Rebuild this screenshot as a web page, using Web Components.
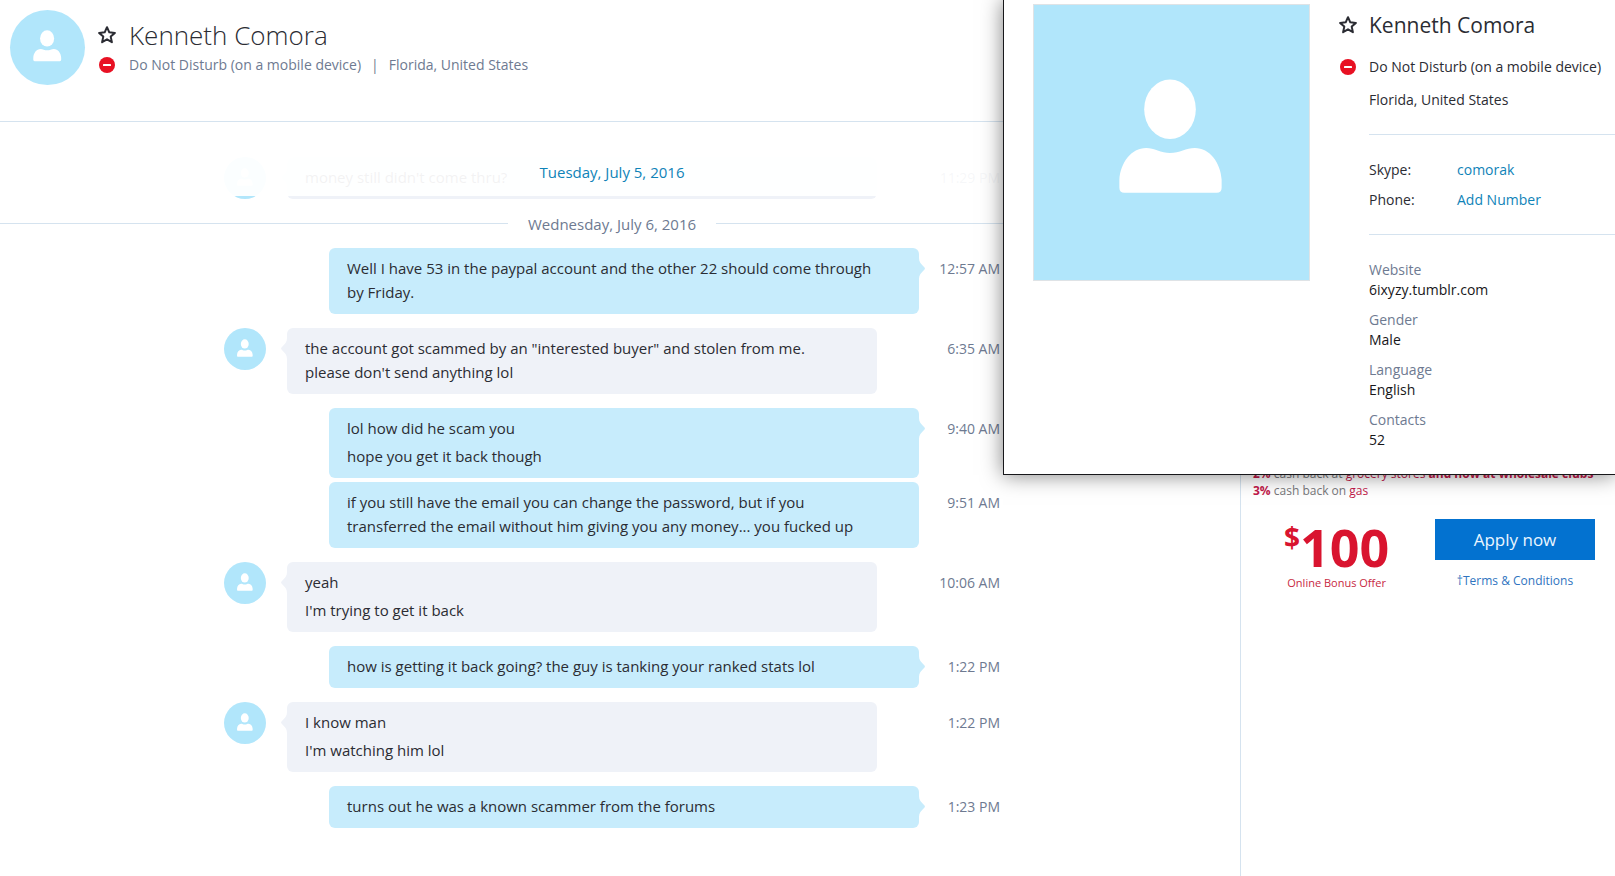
<!DOCTYPE html>
<html lang="en">
<head>
<meta charset="utf-8">
<title>Kenneth Comora</title>
<style>
  html, body { margin: 0; }
  body {
    font: 15px/24px "Open Sans", "Noto Sans", sans-serif;
    color: #2b2c33;
    background: #fff;
    --muted: #6e7a91;
    --link: #0f83b8;
    --rule: #d5e3ef;
    --avatar: #b1e6fb;
  }
</style>
</head>
<body>
<chat-app></chat-app>

<template id="t-app">
  <style>
    :host { display: grid; grid-template-columns: minmax(0, 1fr) 375px; min-height: 100vh; position: relative; overflow: hidden; box-sizing: border-box; }
    main { display: flex; flex-direction: column; min-width: 0; }
  </style>
  <main>
    <chat-header></chat-header>
    <chat-stream></chat-stream>
  </main>
  <side-offer></side-offer>
  <profile-card></profile-card>
</template>

<template id="t-avatar">
  <style>
    :host { display: block; flex: none; width: 42px; height: 42px; border-radius: 50%; background: var(--avatar); overflow: hidden; }
    svg { display: block; width: 100%; height: 100%; }
  </style>
  <svg viewBox="0 0 277 277" fill="#fff" aria-hidden="true">
    <ellipse cx="137" cy="105" rx="26" ry="30"/>
    <path d="M86 184V176C87 159 98 144 113 144C121 144 128 149 137 149C147 149 153 144 162 144C177 144 188 159 189 176V184Q189 189 184 189H91Q86 189 86 184Z"/>
  </svg>
</template>

<template id="t-star">
  <style>
    :host { display: block; flex: none; width: 20px; height: 20px; }
    button { display: block; width: 20px; height: 20px; padding: 0; border: 0; background: none; color: inherit; }
    svg { display: block; }
  </style>
  <button type="button" aria-label="Favourite">
    <svg width="20" height="20" viewBox="0 0 20 20" fill="none" stroke="currentColor" stroke-width="2" stroke-linejoin="round"><path d="M10 2.2L12.3 7.3L17.9 7.9L13.7 11.6L14.9 17.2L10 14.3L5.1 17.2L6.3 11.6L2.1 7.9L7.7 7.3Z"/></svg>
  </button>
</template>

<template id="t-dnd">
  <style>
    :host { display: flex; justify-content: center; flex: none; width: 20px; }
    svg { display: block; }
  </style>
  <svg width="16" height="16" viewBox="0 0 16 16" aria-hidden="true"><circle cx="8" cy="8" r="8" fill="#e81123"/><rect x="4" y="7" width="8" height="2" rx="0.6" fill="#fff"/></svg>
</template>

<template id="t-header">
  <style>
    :host { display: flex; gap: 12px; padding: 10px 10px 36px; border-bottom: 1px solid var(--rule); }
    user-avatar { width: 75px; height: 75px; }
    .who { display: grid; grid-template-columns: 20px 1fr; column-gap: 12px; align-content: start; align-items: center; padding-top: 7px; }
    h1 { margin: 0; font-size: 26px; line-height: 36px; font-weight: 300; }
    p { margin: 0; font-size: 14px; line-height: 24px; color: var(--muted); display: flex; gap: 10px; white-space: nowrap; }
  </style>
  <user-avatar></user-avatar>
  <div class="who">
    <star-button></star-button><h1>Kenneth Comora</h1>
    <dnd-icon></dnd-icon><p><span>Do Not Disturb (on a mobile device)</span><span>|</span><span>Florida, United States</span></p>
  </div>
</template>

<template id="t-stream">
  <style>
    :host { display: block; position: relative; padding: 35px 16px 48px 0; }
    .veil { position: absolute; top: 0; left: 0; right: 16px; height: 74px; box-sizing: border-box; padding-top: 38px; background: rgba(255, 255, 255, .94); color: var(--link); text-align: center; }
    .group { display: flex; flex-direction: column; gap: 4px; width: 100%; max-width: 776px; margin: 0 auto 14px; }
  </style>
  <div class="group">
    <chat-message time="11:29 PM"><p>money still didn't come thru?</p></chat-message>
  </div>
  <day-divider>Wednesday, July 6, 2016</day-divider>
  <div class="group">
    <chat-message own time="12:57 AM"><p>Well I have 53 in the paypal account and the other 22 should come through by Friday.</p></chat-message>
  </div>
  <div class="group">
    <chat-message time="6:35 AM"><p>the account got scammed by an "interested buyer" and stolen from me. please don't send anything lol</p></chat-message>
  </div>
  <div class="group">
    <chat-message own time="9:40 AM"><p>lol how did he scam you</p><p>hope you get it back though</p></chat-message>
    <chat-message own continued time="9:51 AM"><p>if you still have the email you can change the password, but if you transferred the email without him giving you any money... you fucked up</p></chat-message>
  </div>
  <div class="group">
    <chat-message time="10:06 AM"><p>yeah</p><p>I'm trying to get it back</p></chat-message>
  </div>
  <div class="group">
    <chat-message own time="1:22 PM"><p>how is getting it back going? the guy is tanking your ranked stats lol</p></chat-message>
  </div>
  <div class="group">
    <chat-message time="1:22 PM"><p>I know man</p><p>I'm watching him lol</p></chat-message>
  </div>
  <div class="group">
    <chat-message own time="1:23 PM"><p>turns out he was a known scammer from the forums</p></chat-message>
  </div>
  <div class="veil">Tuesday, July 5, 2016</div>
</template>

<template id="t-divider">
  <style>
    :host { display: flex; align-items: center; gap: 20px; height: 21px; margin-bottom: 14px; color: var(--muted); white-space: nowrap; }
    :host::before, :host::after { content: ""; flex: 1; height: 1px; background: var(--rule); }
  </style>
  <slot></slot>
</template>

<template id="t-message">
  <style>
    :host { display: flex; align-items: flex-start; --bubble: #eff2f8; }
    :host([own]) { --bubble: #c7ecfc; }
    .bubble { position: relative; flex: 0 1 590px; box-sizing: border-box; margin-left: 21px; padding: 8px 40px 10px 18px; border-radius: 6px; background: var(--bubble); display: flex; flex-direction: column; gap: 4px; }
    :host([own]) .bubble { margin-left: 105px; }
    :host([own]) user-avatar { display: none; }
    ::slotted(p) { margin: 0; }
    .tail { position: absolute; top: 10px; left: -6px; fill: var(--bubble); }
    :host([own]) .tail { left: auto; right: -6px; transform: scaleX(-1); }
    :host([continued]) .tail { display: none; }
    time { margin-left: auto; padding-top: 9px; font-size: 14px; color: var(--muted); white-space: nowrap; }
  </style>
  <user-avatar></user-avatar>
  <div class="bubble">
    <svg class="tail" width="7" height="21" viewBox="0 0 7 21" aria-hidden="true"><path d="M7 0H6C6 4 4 6 0.5 9.5Q-.3 10.5 .5 11.5C4 15 6 17 6 21H7Z"/></svg>
    <slot></slot>
  </div>
  <time></time>
</template>

<template id="t-offer">
  <style>
    :host { display: block; box-sizing: border-box; border-left: 1px solid var(--rule); padding: 465px 20px 24px 12px; font-size: 12px; line-height: 17px; color: #77777a; }
    p { margin: 0; white-space: nowrap; }
    b, i { color: #c2194a; font-style: normal; }
    .row { display: flex; justify-content: space-between; align-items: flex-start; padding: 20px 0 0 31px; }
    .bonus { display: flex; flex-direction: column; align-items: center; color: #c8283f; font-size: 11px; line-height: 15px; }
    .sum { display: flex; align-items: flex-start; color: #d9142f; font-weight: 700; font-size: 52px; line-height: 56px; }
    .sum span:first-child { font-size: 28px; line-height: 36px; }
    .cta { display: flex; flex-direction: column; align-items: center; gap: 12px; width: 160px; }
    button { width: 160px; height: 41px; padding: 0; border: 0; background: #0372d0; color: #eaf6ff; font: 17px/41px "Open Sans", "Noto Sans", sans-serif; }
    a { color: #2f74c0; text-decoration: none; }
  </style>
  <p><b>2%</b> cash back at <i>grocery stores</i> <b>and now at wholesale clubs</b></p>
  <p><b>3%</b> cash back on <i>gas</i></p>
  <div class="row">
    <div class="bonus"><div class="sum"><span>$</span><span>100</span></div><span>Online Bonus Offer</span></div>
    <div class="cta"><button type="button">Apply now</button><a href="#terms">†Terms &amp; Conditions</a></div>
  </div>
</template>

<template id="t-profile">
  <style>
    :host { position: absolute; top: 0; right: 0; width: 612px; box-sizing: border-box; display: flex; align-items: flex-start; gap: 28px; padding: 4px 0 24px 29px; background: #fff; border: solid #17171a; border-width: 0 0 1px 1px; box-shadow: 0 0 20px rgba(0, 0, 0, .5); }
    user-avatar { width: 275px; height: 275px; border: 1px solid #dfe3e6; border-radius: 0; }
    .info { flex: 1; display: grid; grid-template-columns: 20px 1fr; column-gap: 11px; align-items: center; font-size: 14px; line-height: 20px; padding-top: 4px; }
    .wide { grid-column: 2; }
    h2 { margin: 0; font-size: 21px; line-height: 34px; font-weight: 400; }
    .status { line-height: 50px; }
    .place { line-height: 16px; margin-bottom: 26px; }
    dl { margin: 0; border-top: 1px solid var(--rule); }
    .links { display: grid; grid-template-columns: 88px 1fr; line-height: 30px; padding: 20px 0 19px; }
    .facts { padding-top: 25px; }
    dd { margin: 0; }
    .facts dt { color: var(--muted); }
    .facts dd { margin-bottom: 10px; color: #17171a; }
    .facts dd:last-child { margin-bottom: 0; }
    a { color: var(--link); text-decoration: none; }
  </style>
  <user-avatar></user-avatar>
  <div class="info">
    <star-button></star-button><h2>Kenneth Comora</h2>
    <dnd-icon></dnd-icon><div class="status">Do Not Disturb (on a mobile device)</div>
    <div class="wide place">Florida, United States</div>
    <dl class="wide links">
      <dt>Skype:</dt><dd><a href="#comorak">comorak</a></dd>
      <dt>Phone:</dt><dd><a href="#add-number">Add Number</a></dd>
    </dl>
    <dl class="wide facts">
      <dt>Website</dt><dd>6ixyzy.tumblr.com</dd>
      <dt>Gender</dt><dd>Male</dd>
      <dt>Language</dt><dd>English</dd>
      <dt>Contacts</dt><dd>52</dd>
    </dl>
  </div>
</template>

<script>
  class TemplateElement extends HTMLElement {
    constructor() {
      super();
      const template = document.getElementById(this.constructor.template);
      this.attachShadow({ mode: "open" }).append(template.content.cloneNode(true));
    }
  }
  class ChatMessage extends TemplateElement {
    static template = "t-message";
    static observedAttributes = ["time"];
    attributeChangedCallback(name, before, value) {
      this.shadowRoot.querySelector("time").textContent = value;
    }
  }
  const define = (name, template) =>
    customElements.define(name, class extends TemplateElement { static template = template; });

  define("user-avatar", "t-avatar");
  define("star-button", "t-star");
  define("dnd-icon", "t-dnd");
  customElements.define("chat-message", ChatMessage);
  define("day-divider", "t-divider");
  define("chat-header", "t-header");
  define("chat-stream", "t-stream");
  define("side-offer", "t-offer");
  define("profile-card", "t-profile");
  define("chat-app", "t-app");
</script>
</body>
</html>
